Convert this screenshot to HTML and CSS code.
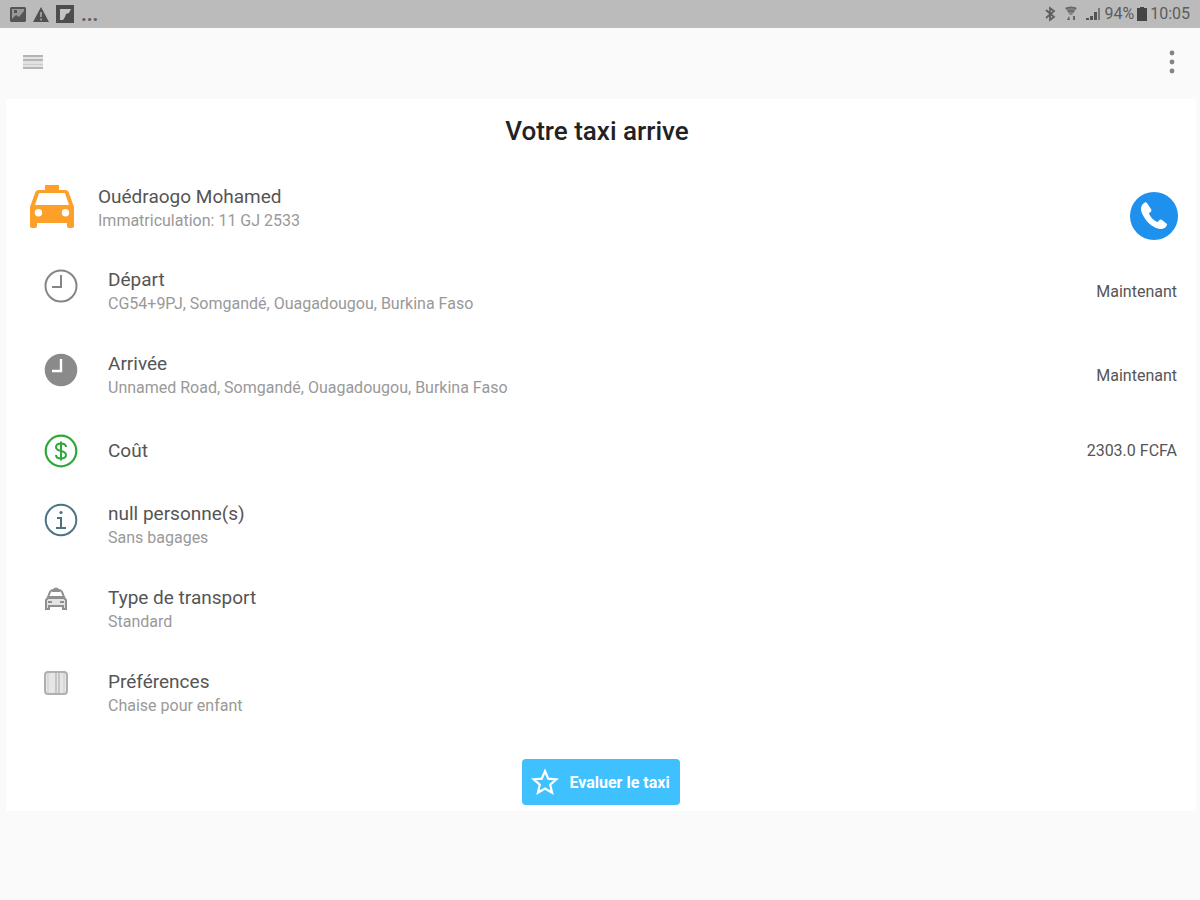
FILE: index.html
```html
<!DOCTYPE html>
<html lang="fr">
<head>
<meta charset="utf-8">
<meta name="viewport" content="width=device-width, initial-scale=1">
<title>Votre taxi arrive</title>
<link rel="stylesheet" href="styles.css">
</head>
<body>
<div class="status">
  <div class="status-group">
    <svg width="16" height="15" viewBox="0 0 16 15"><path fill="#555" d="M1 0h14l1 1v13l-1 1H1l-1-1V1z"/><path fill="#999" d="M2 2h12v2L9 10 6 8l-4 4z"/><path fill="#555" d="M4 3h3v3H4z"/></svg>
    <svg width="16" height="15" viewBox="0 0 16 15"><path fill="#505050" d="M8 0l8 15H0z"/><path stroke="#999" stroke-width="2" d="M8 5v5M8 11.500v2"/></svg>
    <svg width="18" height="18" viewBox="0 0 18 18"><path fill="#4d4d4d" d="M0 0h18v18H0z"/><path fill="#c4c4c4" d="M4 4h11l-2 4-3 1-1 3-2 3H4z"/></svg>
    <span class="more">...</span>
  </div>
  <div class="status-group status-right">
    <svg class="bluetooth" width="12" height="16" viewBox="0 0 12 16" fill="none" stroke="#606060" stroke-width="1.800"><path d="M2 4l8 7-4 3V2l4 3-8 7"/></svg>
    <svg class="wifi" width="12" height="16" viewBox="0 0 12 16"><path fill="#858585" d="M0 2q6-3 12 0L7 9H5z"/><path fill="none" stroke="#666" stroke-width="1.500" d="M1 2.500q5-2 10 0M3 5.500q3-1.500 6 0"/><path fill="#666" d="M2 14l2-4 1 4zM8 10h2v4H8z"/></svg>
    <svg width="15" height="14" viewBox="0 0 15 14" fill="#555"><path d="M0 11h3v2H0zM4 9h3v4H4zM8 5h3v8H8z"/><path fill="#777" d="M12 1h2v12h-2z"/></svg>
    <span>94%</span>
    <svg width="10" height="14" viewBox="0 0 10 14"><path fill="#444" d="M3 0h4v1h3v13H0V1h3z"/></svg>
    <span>10:05</span>
  </div>
</div>
<header class="toolbar">
  <button class="icon-button" aria-label="Menu"><svg width="20" height="16" viewBox="0 0 20 16"><path fill="#e2e2e2" d="M0 1h20v14H0z"/><path stroke="#b5b5b5" stroke-width="2" d="M0 2h20M0 6h20M0 14h20"/><path stroke="#ccc" stroke-width="1" d="M0 10.500h20"/></svg></button>
  <button class="icon-button" aria-label="Options"><svg width="6" height="24" viewBox="0 0 6 24" fill="#848484"><circle cx="3" cy="3" r="2.400"/><circle cx="3" cy="12" r="2.400"/><circle cx="3" cy="21" r="2.400"/></svg></button>
</header>
<main class="card">
  <h1>Votre taxi arrive</h1>
  <section class="driver">
    <svg class="taxi" width="44" height="44" viewBox="0 0 44 44"><path fill="#fca02a" fill-rule="evenodd" d="M15 0h14v5h6q3 0 4 3l5 14v19q0 2-2 2h-3q-2 0-2-2v-3H7v3q0 2-2 2H2q-2 0-2-2V22L5 8q1-3 4-3h6zM9 8L5 20h34L35 8zM8.500 24a3.700 3.700 0 1 0 0 7.400a3.700 3.700 0 1 0 0-7.400zM35.500 24a3.700 3.700 0 1 0 0 7.400a3.700 3.700 0 1 0 0-7.400z"/></svg>
    <div class="text"><h2>Ouédraogo Mohamed</h2><p>Immatriculation: 11 GJ 2533</p></div>
    <button class="call" aria-label="Appeler le taxi"><svg width="30" height="30" viewBox="0 0 30 30"><path fill="#fff" d="M5 2C1 5 1 10 5 16c4 7 10 11 16 12 4 0 7-2 7-5l-5-4c-2-1-3 0-4 2-4-1-8-5-9-9 2-1 3-2 2-4L8 2C7 1 6 1 5 2z"/></svg></button>
  </section>
  <ul class="details">
    <li>
      <svg width="34" height="34" viewBox="0 0 34 34" fill="none" stroke="#858585" stroke-width="2"><circle cx="17" cy="17" r="15.500"/><path d="M17 6v12H8"/></svg>
      <div class="text"><h2>Départ</h2><p>CG54+9PJ, Somgandé, Ouagadougou, Burkina Faso</p></div>
      <span class="value">Maintenant</span>
    </li>
    <li>
      <svg width="34" height="34" viewBox="0 0 34 34"><circle cx="17" cy="17" r="16.300" fill="#8a8a8a"/><path fill="none" stroke="#fff" stroke-width="2.400" d="M17 6v12H8"/></svg>
      <div class="text"><h2>Arrivée</h2><p>Unnamed Road, Somgandé, Ouagadougou, Burkina Faso</p></div>
      <span class="value">Maintenant</span>
    </li>
    <li class="single">
      <svg width="34" height="34" viewBox="0 0 34 34" fill="none" stroke="#2fa83a" stroke-width="2.200"><circle cx="17" cy="17" r="15.300"/><path stroke-width="2" d="M22 13c0-2-2-3.500-5-3.500s-5 1.300-5 3.700c0 5 10 2.500 10 7.600 0 2.400-2 3.700-5 3.700s-5-1.500-5-3.500M17 7.500v19"/></svg>
      <div class="text"><h2>Coût</h2></div>
      <span class="value">2303.0 FCFA</span>
    </li>
    <li>
      <svg width="34" height="34" viewBox="0 0 34 34" fill="none" stroke="#4b7383" stroke-width="2"><circle cx="17" cy="17" r="15.300"/><path d="M13 15h4v10M12 25h10"/><circle cx="17" cy="9.500" r="1.600" fill="#4b7383" stroke="none"/></svg>
      <div class="text"><h2>null personne(s)</h2><p>Sans bagages</p></div>
    </li>
    <li>
      <svg width="24" height="24" viewBox="0 0 24 24"><g fill="none" stroke="#8f8f8f" stroke-width="2"><path fill="#e4e4e4" d="M2 22v-9l2-2h16l2 2v9h-3v-3H5v3z"/><path d="M4 10l2-5q1-2 3-2h6q2 0 3 2l2 5z"/></g><path fill="#8f8f8f" d="M8 3q4-5 8 0v2H8zM4 14h4v2H4zM16 14h4v2h-4z"/></svg>
      <div class="text"><h2>Type de transport</h2><p>Standard</p></div>
    </li>
    <li>
      <svg width="24" height="24" viewBox="0 0 24 24"><rect x="1" y="1" width="22" height="22" rx="3" fill="#e6e6e6" stroke="#b0b0b0" stroke-width="2"/><path fill="none" stroke="#bbb" stroke-width="1.500" d="M12 2v20M15 2v20"/><path stroke="#ccc" d="M4 2v20M20 2v20"/></svg>
      <div class="text"><h2>Préférences</h2><p>Chaise pour enfant</p></div>
    </li>
  </ul>
  <button class="rate"><svg width="28" height="28" viewBox="0 0 28 28" fill="none" stroke="#fff" stroke-width="2.200"><path d="M14 3l3.200 7.600 8.300.7-6.300 5.400 1.900 8.100-7.100-4.300-7.100 4.300 1.900-8.100-6.300-5.400 8.300-.7z"/></svg>Evaluer le taxi</button>
</main>
</body>
</html>
```
FILE: styles.css
```css
* { box-sizing: border-box; }
body {
  margin: 0;
  min-height: 100vh;
  background: #fafafa;
  color: #555;
  font-family: Roboto, "Liberation Sans", sans-serif;
}
h1, h2, p, ul { margin: 0; padding: 0; font-weight: 400; }
button { border: 0; padding: 0; background: none; font: inherit; cursor: pointer; }
svg { display: block; flex: none; }

.status {
  display: flex;
  justify-content: space-between;
  height: 28px;
  padding: 0 10px;
  background: #bbb;
  color: #5c5c5c;
  font-size: 16px;
  line-height: 30px;
}
.status-group { display: flex; align-items: center; gap: 7px; }
.more { font-size: 20px; font-weight: 700; }
.status-right { gap: 3px; }
.bluetooth, .wifi { margin-right: 6px; }

.toolbar {
  display: flex;
  justify-content: space-between;
  align-items: center;
  height: 71px;
  padding: 0 25px 4px 23px;
}

.card {
  display: flex;
  flex-direction: column;
  margin: 0 4px 0 6px;
  padding: 16px 0 6px;
  background: #fff;
}
h1 {
  padding-right: 8px;
  color: #222;
  font-size: 26px;
  font-weight: 500;
  line-height: 32px;
  text-align: center;
}
.driver { display: flex; align-items: flex-start; padding: 38px 18px 10px 24px; }
.taxi { margin-right: 24px; }
.text { flex: 1; }
.text h2 { color: #555; font-size: 19px; line-height: 24px; }
.text p { color: #999; font-size: 16px; line-height: 24px; }
.call {
  display: flex;
  align-items: center;
  justify-content: center;
  width: 48px;
  height: 48px;
  margin-top: 7px;
  border-radius: 50%;
  background: #1e90ee;
}

.details { list-style: none; padding: 0 19px 0 38px; }
.details li {
  display: grid;
  grid-template-columns: 64px 1fr auto;
  align-items: start;
  padding: 18px 0;
}
.details svg { margin-top: 1px; }
.details li.single { padding: 15px 0 16px; align-items: center; }
.value { align-self: center; color: #555; font-size: 16px; line-height: 24px; }

.rate {
  display: flex;
  align-items: center;
  align-self: center;
  gap: 10px;
  height: 46px;
  margin-top: 23px;
  padding: 0 10px 0 9px;
  border-radius: 4px;
  background: #3fc1ff;
  color: #fff;
  font-size: 16px;
  font-weight: 700;
}
```
